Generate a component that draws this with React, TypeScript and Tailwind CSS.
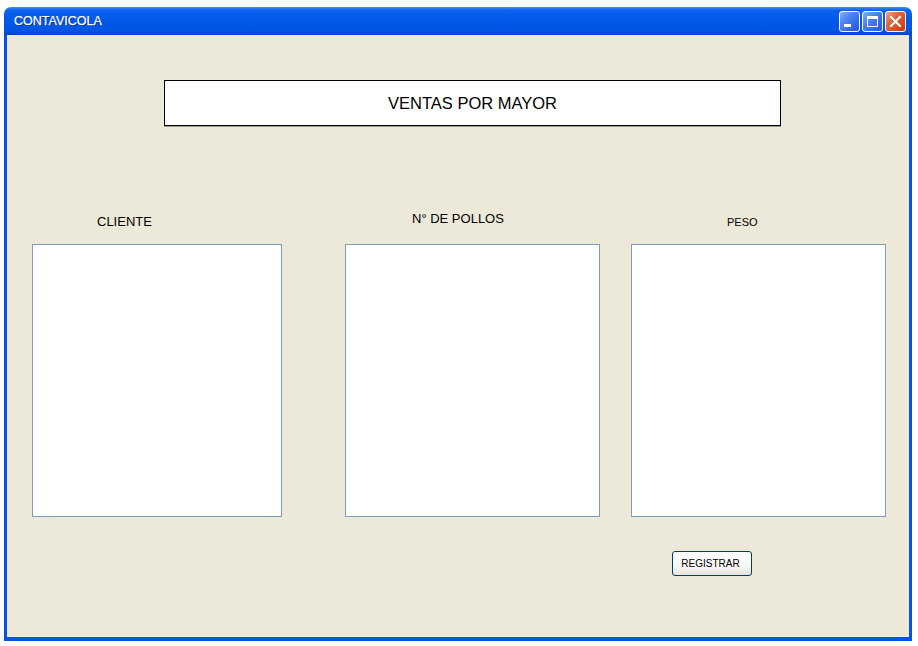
import React from "react";

const font = { fontFamily: '"Liberation Sans", Arial, sans-serif' };

function TitleButton({ kind }: { kind: "min" | "max" | "close" }) {
  const bg =
    kind === "close"
      ? "bg-[linear-gradient(135deg,#F0A48A_0%,#E2693F_35%,#D8461E_75%,#C83C12_100%)]"
      : "bg-[linear-gradient(135deg,#86AEFA_0%,#4F86F2_35%,#2F66E6_75%,#2456D8_100%)]";
  return (
    <div
      className={`w-[21px] h-[21px] rounded-[3px] border border-white ${bg} flex items-center justify-center`}
    >
      {kind === "min" && (
        <svg width="19" height="19" viewBox="0 0 19 19">
          <rect x="4" y="12" width="7" height="3" fill="#fff" />
        </svg>
      )}
      {kind === "max" && (
        <svg width="19" height="19" viewBox="0 0 19 19">
          <rect x="4.5" y="4.5" width="10" height="10" fill="none" stroke="#fff" strokeWidth="1" />
          <rect x="4" y="4" width="11" height="3" fill="#fff" />
        </svg>
      )}
      {kind === "close" && (
        <svg width="19" height="19" viewBox="0 0 19 19">
          <path d="M5 5 L14 14 M14 5 L5 14" stroke="#fff" strokeWidth="2" strokeLinecap="square" />
        </svg>
      )}
    </div>
  );
}

export default function App() {
  return (
    <div className="w-[918px] h-[646px] bg-white pl-[4px] pt-[7px]" style={font}>
      <div className="w-[908px] h-[634px] flex flex-col rounded-t-[7px] overflow-hidden">
        <div className="h-[28px] flex items-center justify-between pl-[10px] pr-[6px] bg-[linear-gradient(to_bottom,#3E8EF7_0%,#0C61EE_12%,#0058E8_50%,#0055E3_85%,#0045C9_100%)]">
          <span className="text-white text-[12.5px] [text-shadow:1px_1px_0_#0A2A8A] [-webkit-text-stroke:0.25px_#fff]">
            CONTAVICOLA
          </span>
          <div className="flex gap-[2px] mt-[1px]">
            <TitleButton kind="min" />
            <TitleButton kind="max" />
            <TitleButton kind="close" />
          </div>
        </div>

        <div className="flex-1 bg-[#ECE9D8] border-l-[3px] border-r-[3px] border-b-[4px] border-[#0055E5]">
          <div className="mt-[45px] ml-[157px] w-[617px] h-[46px] border border-black bg-white flex items-center justify-center shadow-[0_1px_0_#9a9a90]">
            <span className="text-[16.5px] text-black">VENTAS POR MAYOR</span>
          </div>

          <div className="flex mt-[74px]">
            <div className="ml-[25px] w-[250px] flex flex-col">
              <div className="h-[44px] pt-[14px] pl-[65px] text-[13px] leading-[16px] text-black">
                CLIENTE
              </div>
              <div className="h-[273px] border border-[#7F9DB9] bg-white" />
            </div>

            <div className="ml-[63px] w-[255px] flex flex-col">
              <div className="h-[44px] pt-[11px] pl-[67px] text-[13px] leading-[16px] text-black">
                N° DE POLLOS
              </div>
              <div className="h-[273px] border border-[#7F9DB9] bg-white" />
            </div>

            <div className="ml-[31px] w-[255px] flex flex-col">
              <div className="h-[44px] pt-[14px] pl-[96px] text-[11px] leading-[16px] text-black">
                PESO
              </div>
              <div className="h-[273px] border border-[#7F9DB9] bg-white" />
              <button className="mt-[34px] ml-[41px] w-[80px] h-[25px] rounded-[3px] border border-[#003C74] bg-[linear-gradient(to_bottom,#FFFFFF_0%,#F7F7F4_60%,#E6E4DA_100%)] text-[10px] text-black flex items-center justify-center pr-[3px]">
                REGISTRAR
              </button>
            </div>
          </div>
        </div>
      </div>
    </div>
  );
}
